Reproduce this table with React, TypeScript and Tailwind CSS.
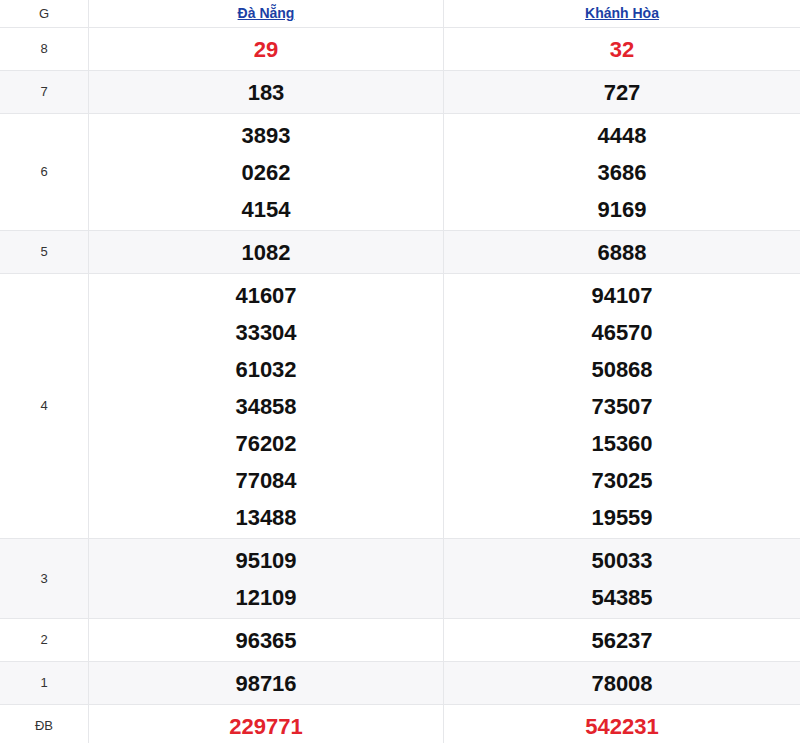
import React from 'react';

type Row = { label: string; a: string[]; b: string[]; red?: boolean };

const rows: Row[] = [
  { label: '8', a: ['29'], b: ['32'], red: true },
  { label: '7', a: ['183'], b: ['727'] },
  { label: '6', a: ['3893', '0262', '4154'], b: ['4448', '3686', '9169'] },
  { label: '5', a: ['1082'], b: ['6888'] },
  {
    label: '4',
    a: ['41607', '33304', '61032', '34858', '76202', '77084', '13488'],
    b: ['94107', '46570', '50868', '73507', '15360', '73025', '19559'],
  },
  { label: '3', a: ['95109', '12109'], b: ['50033', '54385'] },
  { label: '2', a: ['96365'], b: ['56237'] },
  { label: '1', a: ['98716'], b: ['78008'] },
  { label: 'ĐB', a: ['229771'], b: ['542231'], red: true },
];

const Numbers = ({ values, red, last }: { values: string[]; red?: boolean; last?: boolean }) => (
  <div
    className={`flex flex-col items-center justify-center pt-[3px] pb-[2px] ${last ? '' : 'border-r border-[#e6e7ea]'}`}
  >
    {values.map((v) => (
      <span
        key={v}
        className={`text-[22px] font-bold leading-[37px] ${red ? 'text-[#e3232c]' : 'text-[#111]'}`}
      >
        {v}
      </span>
    ))}
  </div>
);

export default function App() {
  return (
    <div className="w-[800px] bg-white font-['Liberation_Sans',Arial,sans-serif]">
      <div className="grid h-[28px] grid-cols-[89px_355px_1fr] border-b border-[#e6e7ea]">
        <div className="flex items-center justify-center border-r border-[#e6e7ea] text-[13px] text-[#333]">
          G
        </div>
        <div className="flex items-center justify-center border-r border-[#e6e7ea]">
          <a href="#" className="text-[14px] font-bold text-[#1b3fa5] underline">
            Đà Nẵng
          </a>
        </div>
        <div className="flex items-center justify-center">
          <a href="#" className="text-[14px] font-bold text-[#1b3fa5] underline">
            Khánh Hòa
          </a>
        </div>
      </div>
      {rows.map((r, i) => (
        <div
          key={r.label}
          className={`grid grid-cols-[89px_355px_1fr] border-b border-[#e6e7ea] ${i % 2 === 1 ? 'bg-[#f7f7f9]' : 'bg-white'}`}
        >
          <div className="flex items-center justify-center border-r border-[#e6e7ea] text-[13px] text-[#333]">
            {r.label}
          </div>
          <Numbers values={r.a} red={r.red} />
          <Numbers values={r.b} red={r.red} last />
        </div>
      ))}
    </div>
  );
}
